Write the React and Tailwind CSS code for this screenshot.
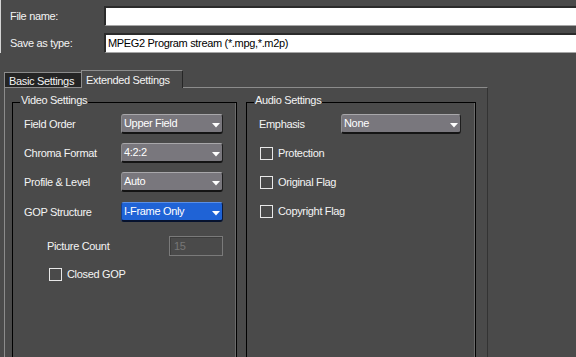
import React from "react";

function Arrow() {
  return (
    <svg width="8" height="5" viewBox="0 0 8 5" className="translate-y-[2px] shrink-0">
      <polygon points="0,0 8,0 4,4.5" fill="#ffffff" />
    </svg>
  );
}

function Select({ value, className, blue }) {
  const skin = blue
    ? "bg-[#1f63d6] border-[#173e8a] border-t-[#5a8fe6] border-b-[#06122e] border-r-[#0a1a40]"
    : "bg-[#79777d] border-[#8e8d90] border-t-[#a8a7aa] border-b-[#141414] border-r-[#1e1e1e]";
  return (
    <div
      className={`flex items-center justify-between h-[20px] rounded-[3px] border border-b-2 pl-[2px] pr-[2px] text-white ${skin} ${className}`}
    >
      <span className="whitespace-nowrap">{value}</span>
      <Arrow />
    </div>
  );
}

function Check({ label, className }) {
  return (
    <div className={`flex items-center h-[13px] ${className}`}>
      <div className="w-[13px] h-[13px] border border-[#e8e8e8] shrink-0" />
      <span className="ml-[5px] whitespace-nowrap">{label}</span>
    </div>
  );
}

function Group({ title, className, children }) {
  return (
    <div
      className={`relative border-t border-x border-black shadow-[inset_-1px_0_0_#6a6a6a] ${className}`}
    >
      <span className="absolute left-[7px] top-[-9px] px-[1px] bg-[#4a4a4a] whitespace-nowrap">
        {title}
      </span>
      {children}
    </div>
  );
}

export default function App() {
  return (
    <div className="w-[576px] h-[357px] overflow-hidden bg-[#4a4a4a] text-[11px] leading-[13px] tracking-[-0.33px] text-[#f4f4f4] font-['Liberation_Sans',Arial,sans-serif] flex flex-col">
      {/* header */}
      <div className="h-[53px] shrink-0 border-l border-[#d4d4d4] pl-[9px] pt-[6px] flex flex-col gap-[7px]">
        <div className="flex items-center h-[20px]">
          <span className="w-[94px] shrink-0">File name:</span>
          <div className="flex-1 h-[20px] bg-white border-t-2 border-l-2 border-[#2b2b2b] border-b border-b-[#a6a6a6]" />
        </div>
        <div className="flex items-center h-[20px]">
          <span className="w-[94px] shrink-0">Save as type:</span>
          <div className="flex-1 h-[20px] bg-white border-t-2 border-l-2 border-[#2b2b2b] border-b border-b-[#a6a6a6] pl-[2px] flex items-center text-black whitespace-nowrap">
            MPEG2 Program stream (*.mpg,*.m2p)
          </div>
        </div>
      </div>

      {/* tabs */}
      <div className="mt-[17px] h-[17px] shrink-0 pl-[4px] flex items-end">
        <div className="w-[77px] h-[15px] border-t border-l border-[#8c8c8c] bg-[#242424] pl-[4px] pt-[2px] whitespace-nowrap">
          Basic Settings
        </div>
        <div className="relative z-10 w-[102px] h-[18px] -mb-[1px] border-t border-l border-[#8c8c8c] border-r border-r-[#262626] bg-[#4a4a4a] pl-[4px] pt-[3px] whitespace-nowrap">
          Extended Settings
        </div>
      </div>

      {/* panel */}
      <div className="ml-[4px] w-[484px] flex-1 border-t border-l border-[#8c8c8c] border-r border-r-[#333333] pl-[7px] pt-[14px] flex gap-[9px]">
        <Group title="Video Settings" className="w-[225px] h-[260px] pl-[11px] pt-[11px]">
          <div className="flex items-center h-[20px]">
            <span className="w-[97px] shrink-0">Field Order</span>
            <Select value="Upper Field" className="w-[102px]" />
          </div>
          <div className="flex items-center h-[20px] mt-[9px]">
            <span className="w-[97px] shrink-0">Chroma Format</span>
            <Select value="4:2:2" className="w-[102px]" />
          </div>
          <div className="flex items-center h-[20px] mt-[9px]">
            <span className="w-[97px] shrink-0">Profile &amp; Level</span>
            <Select value="Auto" className="w-[102px]" />
          </div>
          <div className="flex items-center h-[20px] mt-[10px]">
            <span className="w-[97px] shrink-0">GOP Structure</span>
            <Select value="I-Frame Only" className="w-[102px]" blue />
          </div>
          <div className="flex items-center h-[20px] mt-[14px] pl-[23px]">
            <span className="w-[122px] shrink-0">Picture Count</span>
            <div className="w-[54px] h-[20px] border border-[#7a7a7a] shadow-[inset_1px_1px_0_#3c3c3c] pl-[4px] flex items-center text-[#777777]">
              15
            </div>
          </div>
          <Check label="Closed GOP" className="mt-[12px] ml-[25px]" />
        </Group>

        <Group title="Audio Settings" className="w-[230px] h-[260px] pl-[12px] pt-[11px]">
          <div className="flex items-center h-[20px]">
            <span className="w-[82px] shrink-0">Emphasis</span>
            <Select value="None" className="w-[120px]" />
          </div>
          <Check label="Protection" className="mt-[13px] ml-[1px]" />
          <Check label="Original Flag" className="mt-[16px] ml-[1px]" />
          <Check label="Copyright Flag" className="mt-[16px] ml-[1px]" />
        </Group>
      </div>
    </div>
  );
}
